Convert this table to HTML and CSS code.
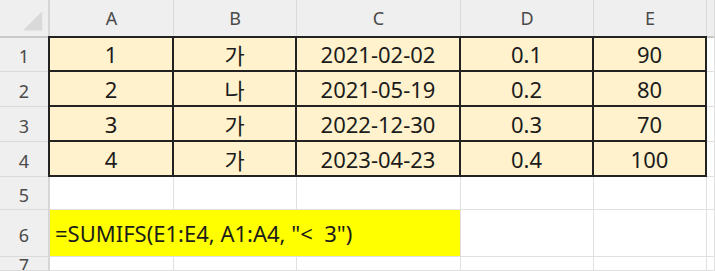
FILE: index.html
```html
<!DOCTYPE html>
<html lang="ko">
<head>
<meta charset="utf-8">
<link rel="stylesheet" href="styles.css">
</head>
<body>
<div class="sheet">
  <div class="corner">
    <svg width="50" height="38" viewBox="0 0 50 38"><polygon points="44,12 44,32 24,32" fill="#d9d9d9"/></svg>
  </div>
  <div class="colhead">A</div>
  <div class="colhead">B</div>
  <div class="colhead">C</div>
  <div class="colhead">D</div>
  <div class="colhead">E</div>
  <div class="colhead"></div>

  <div class="rowhead">1</div>
  <div class="cell data first top">1</div>
  <div class="cell data top">가</div>
  <div class="cell data top">2021-02-02</div>
  <div class="cell data top">0.1</div>
  <div class="cell data top">90</div>
  <div class="cell"></div>

  <div class="rowhead">2</div>
  <div class="cell data first">2</div>
  <div class="cell data">나</div>
  <div class="cell data">2021-05-19</div>
  <div class="cell data">0.2</div>
  <div class="cell data">80</div>
  <div class="cell"></div>

  <div class="rowhead">3</div>
  <div class="cell data first">3</div>
  <div class="cell data">가</div>
  <div class="cell data">2022-12-30</div>
  <div class="cell data">0.3</div>
  <div class="cell data">70</div>
  <div class="cell"></div>

  <div class="rowhead">4</div>
  <div class="cell data first">4</div>
  <div class="cell data">가</div>
  <div class="cell data">2023-04-23</div>
  <div class="cell data">0.4</div>
  <div class="cell data">100</div>
  <div class="cell"></div>

  <div class="rowhead">5</div>
  <div class="cell"></div>
  <div class="cell"></div>
  <div class="cell"></div>
  <div class="cell"></div>
  <div class="cell"></div>
  <div class="cell"></div>

  <div class="rowhead">6</div>
  <div class="cell formula">=SUMIFS(E1:E4, A1:A4, "&lt;&nbsp; 3")</div>
  <div class="cell"></div>
  <div class="cell"></div>
  <div class="cell"></div>

  <div class="rowhead">7</div>
  <div class="cell"></div>
  <div class="cell"></div>
  <div class="cell"></div>
  <div class="cell"></div>
  <div class="cell"></div>
  <div class="cell"></div>
</div>
</body>
</html>
```
FILE: styles.css
```css
html, body {
  margin: 0;
  padding: 0;
  background: #ffffff;
}
.sheet {
  width: 715px;
  height: 271px;
  overflow: hidden;
  display: grid;
  grid-template-columns: 50px 124px 123px 164px 133px 113px 1fr;
  grid-template-rows: 38px 34px 35px 35px 35px 33px 47px 1fr;
  font-family: "Noto Sans", "Noto Sans CJK KR", sans-serif;
}
.sheet > div {
  box-sizing: border-box;
  display: flex;
  align-items: center;
  justify-content: center;
  overflow: hidden;
  white-space: nowrap;
}
.corner {
  background: #efefef;
  border-right: 2px solid #d6d6d6;
  border-bottom: 2px solid #c9c9c9;
}
.corner svg { display: block; }
.colhead {
  background: #efefef;
  border-right: 1px solid #dadada;
  border-bottom: 2px solid #c9c9c9;
  color: #4a4a4a;
  font-size: 18px;
}
.rowhead {
  background: #efefef;
  border-right: 2px solid #d6d6d6;
  border-bottom: 1px solid #dadada;
  color: #4a4a4a;
  font-size: 18px;
  padding-top: 3px;
}
.cell {
  border-right: 1px solid #e0e0e0;
  border-bottom: 1px solid #e0e0e0;
  font-size: 22px;
  color: #1c1c1c;
}
.data {
  background: #fff2cc;
  border-right: 2px solid #222222;
  border-bottom: 2px solid #222222;
}
.data.first {
  border-left: 2px solid #222222;
  margin-left: -2px;
}
.data.top {
  border-top: 2px solid #222222;
  margin-top: -2px;
}
.formula {
  grid-column: span 3;
  background: #ffff00;
  justify-content: flex-start !important;
  padding-left: 5px;
  border-right: 1px solid #e0e0e0;
}
```
